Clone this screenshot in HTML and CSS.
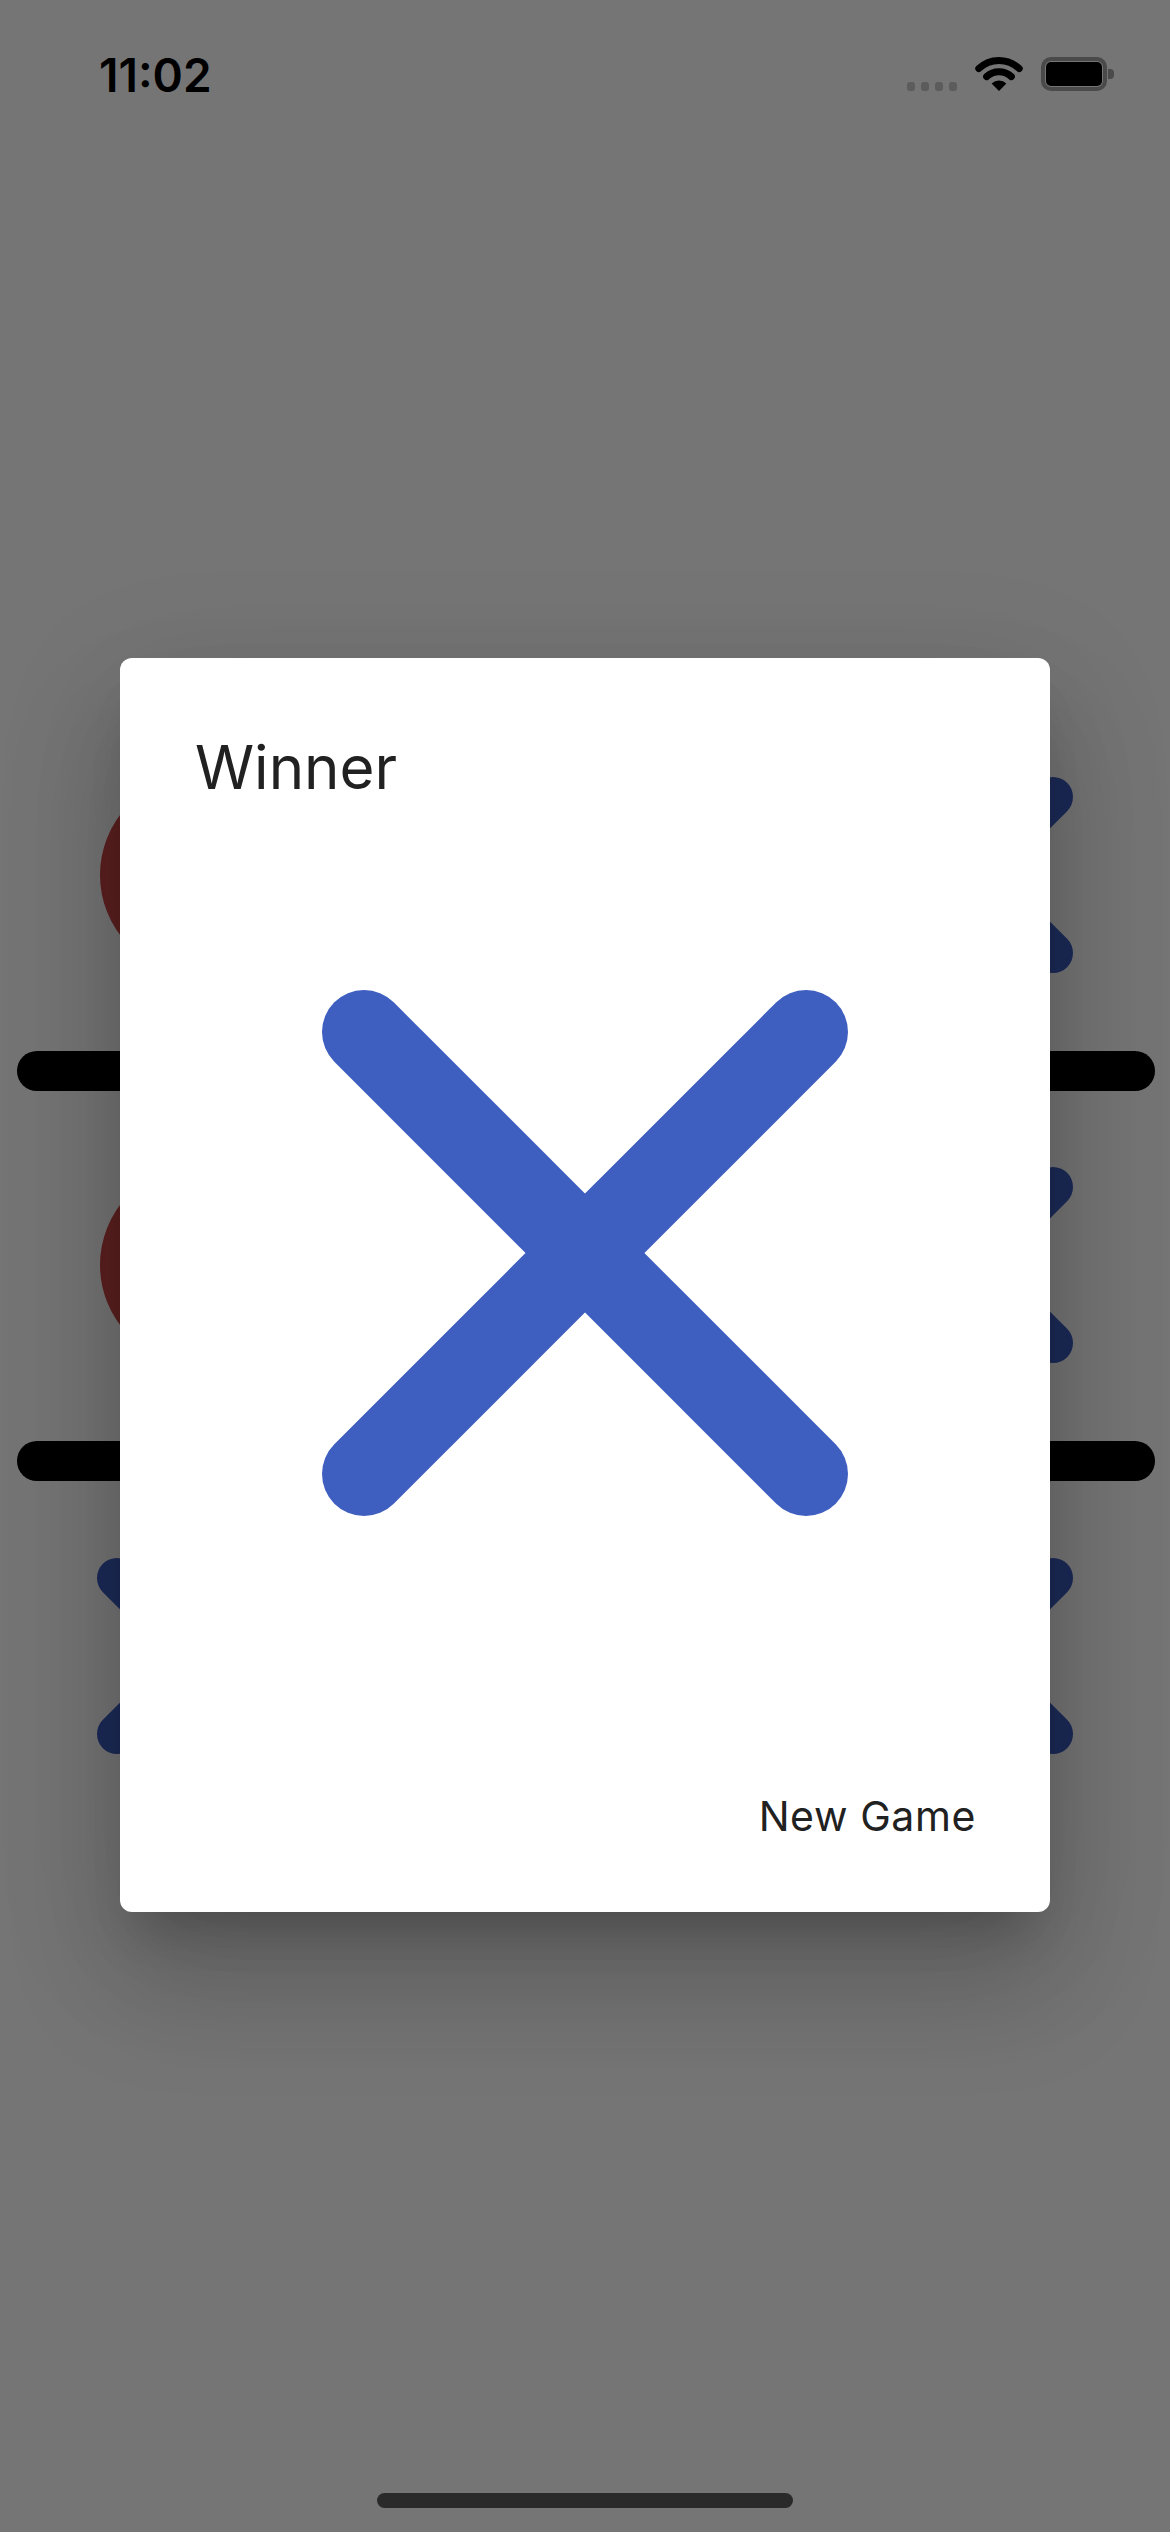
FILE: index.html
```html
<!DOCTYPE html>
<html lang="en">
<head>
<meta charset="utf-8">
<title>Tic Tac Toe - Winner</title>
<link rel="stylesheet" href="styles.css">
</head>
<body>
<div class="screen">
  <div class="status-bar">
    <span class="time">11:02</span>
    <div class="status-icons">
      <div class="signal"><i></i><i></i><i></i><i></i></div>
      <svg class="wifi" width="48" height="36" viewBox="0 0 48 36">
        <path d="M3.8 13.6 A29 29 0 0 1 44.2 13.6" fill="none" stroke="#000" stroke-width="7" stroke-linecap="round"/>
        <path d="M11.6 21.6 A18 18 0 0 1 36.4 21.6" fill="none" stroke="#000" stroke-width="7" stroke-linecap="round"/>
        <path d="M24 36 L16.6 28.6 A10.5 10.5 0 0 1 31.4 28.6 Z" fill="#000"/>
      </svg>
      <div class="battery">
        <div class="battery-body"><div class="battery-fill"></div></div>
        <div class="battery-nub"></div>
      </div>
    </div>
  </div>

  <svg class="board" width="1170" height="1300" viewBox="0 0 1170 1300">
    <g stroke="#000" stroke-width="40" stroke-linecap="round">
      <line x1="37" y1="471" x2="1135" y2="471"/>
      <line x1="37" y1="861" x2="1135" y2="861"/>
      <line x1="391" y1="95" x2="391" y2="1235"/>
      <line x1="780" y1="95" x2="780" y2="1235"/>
    </g>
    <g fill="none" stroke="#c84646" stroke-width="40">
      <circle cx="200" cy="275" r="80"/>
      <circle cx="200" cy="665" r="80"/>
    </g>
    <g stroke="#3e5ec0" stroke-width="40" stroke-linecap="round">
      <line x1="897" y1="197" x2="1053" y2="353"/>
      <line x1="1053" y1="197" x2="897" y2="353"/>
      <line x1="897" y1="587" x2="1053" y2="743"/>
      <line x1="1053" y1="587" x2="897" y2="743"/>
      <line x1="897" y1="978" x2="1053" y2="1134"/>
      <line x1="1053" y1="978" x2="897" y2="1134"/>
      <line x1="117" y1="978" x2="273" y2="1134"/>
      <line x1="273" y1="978" x2="117" y2="1134"/>
    </g>
  </svg>

  <div class="home-indicator"></div>

  <div class="scrim">
    <div class="dialog" role="dialog">
      <h2 class="dialog-title">Winner</h2>
      <div class="dialog-content">
        <svg class="winner-mark" width="526" height="526" viewBox="0 0 526 526">
          <g stroke="#3e5ec0" stroke-width="84" stroke-linecap="round">
            <line x1="42" y1="42" x2="484" y2="484"/>
            <line x1="484" y1="42" x2="42" y2="484"/>
          </g>
        </svg>
      </div>
      <div class="dialog-actions">
        <button class="text-button" type="button">New Game</button>
      </div>
    </div>
  </div>
</div>
</body>
</html>
```

FILE: styles.css
```css
* { box-sizing: border-box; }

html, body {
  margin: 0;
  padding: 0;
}

body {
  font-family: Inter, "Noto Sans", sans-serif;
  background: #ffffff;
}

.screen {
  position: relative;
  width: 1170px;
  height: 2532px;
  overflow: hidden;
  background: #ffffff;
}

/* status bar */
.status-bar {
  position: relative;
  z-index: 2;
  height: 150px;
  display: flex;
  align-items: flex-start;
  padding: 52px 56px 0 99px;
}

.time {
  font-size: 46px;
  line-height: 46px;
  font-weight: 600;
  color: #000;
  letter-spacing: 0;
}

.status-icons {
  margin-left: auto;
  margin-top: 3px;
  height: 36px;
  display: flex;
  align-items: flex-end;
  gap: 18px;
}

.signal {
  display: flex;
  gap: 6px;
}

.signal i {
  display: block;
  width: 8px;
  height: 9px;
  border-radius: 3px;
  background: #5c5c5c;
}

.wifi { display: block; }

.battery {
  display: flex;
  align-items: center;
  gap: 1px;
}

.battery-body {
  width: 66px;
  height: 34px;
  border: 4px solid #4a4a4a;
  border-radius: 10px;
  padding: 1px;
}

.battery-fill {
  width: 100%;
  height: 100%;
  background: #000;
  border-radius: 5px;
}

.battery-nub {
  width: 6px;
  height: 10px;
  background: #4a4a4a;
  border-radius: 0 4px 4px 0;
}

/* board */
.board {
  display: block;
  margin-top: 450px;
}

.home-indicator {
  position: relative;
  z-index: 2;
  width: 416px;
  height: 15px;
  margin: 593px auto 0;
  border-radius: 8px;
  background: #2a2a2a;
}

/* dialog */
.scrim {
  position: absolute;
  inset: 0;
  z-index: 1;
  background: rgba(0, 0, 0, 0.54);
  display: flex;
  justify-content: center;
  align-items: flex-start;
  padding-top: 658px;
}

.dialog {
  width: 930px;
  background: #ffffff;
  border-radius: 12px;
  box-shadow:
    0 33px 45px -21px rgba(0, 0, 0, 0.2),
    0 72px 114px 9px rgba(0, 0, 0, 0.14),
    0 30px 130px 6px rgba(0, 0, 0, 0.1);
}

.dialog-title {
  margin: 0;
  padding: 73px 72px 0 75px;
  font-size: 60px;
  line-height: 72px;
  font-weight: 400;
  color: #212121;
}

.dialog-content {
  margin-top: 187px;
  display: flex;
  justify-content: center;
}

.winner-mark { display: block; }

.dialog-actions {
  margin-top: 275px;
  display: flex;
  justify-content: flex-end;
  padding: 0 74px 70px 0;
}

.text-button {
  background: none;
  border: 0;
  padding: 0;
  margin: 0;
  font-family: Inter, "Noto Sans", sans-serif;
  font-size: 41px;
  line-height: 51px;
  font-weight: 400;
  color: #212121;
  letter-spacing: 0.6px;
}
```
